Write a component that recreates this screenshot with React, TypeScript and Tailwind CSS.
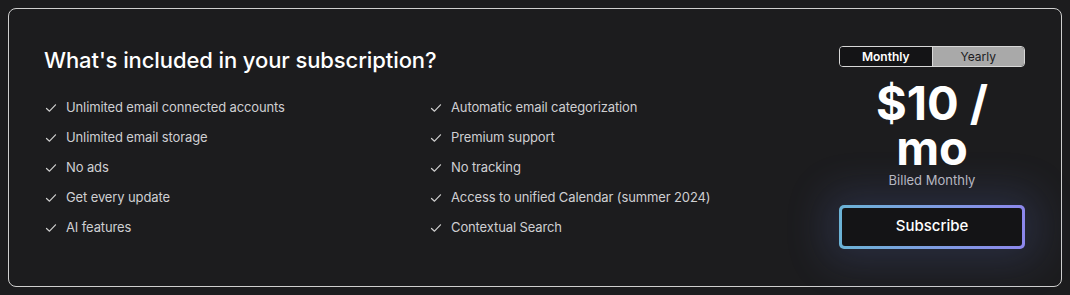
import React, { useState } from 'react';

const leftFeatures = [
  'Unlimited email connected accounts',
  'Unlimited email storage',
  'No ads',
  'Get every update',
  'AI features',
];

const rightFeatures = [
  'Automatic email categorization',
  'Premium support',
  'No tracking',
  'Access to unified Calendar (summer 2024)',
  'Contextual Search',
];

const Check: React.FC = () => (
  <svg width="12" height="12" viewBox="0 0 12 12" fill="none" className="shrink-0">
    <path d="M1.5 6.5 L4.5 9.2 L10.5 2.8" stroke="#cfcfcf" strokeWidth="1.2" strokeLinecap="round" strokeLinejoin="round" />
  </svg>
);

const FeatureList: React.FC<{ items: string[] }> = ({ items }) => (
  <ul className="flex flex-col gap-[12px]">
    {items.map((item) => (
      <li key={item} className="flex items-center gap-[9px] h-[18px] text-[13px] tracking-[-0.12px] text-[#cfcfd2]">
        <Check />
        {item}
      </li>
    ))}
  </ul>
);

const App: React.FC = () => {
  const [period, setPeriod] = useState<'monthly' | 'yearly'>('monthly');

  return (
    <div
      className="w-[1070px] h-[295px] bg-[#1c1c1e] p-[8px]"
      style={{ fontFamily: 'Inter, "Liberation Sans", sans-serif' }}
    >
      <div className="h-[279px] rounded-[8px] border-[1.5px] border-[#cfcfcf] bg-[#1c1c1e] flex pl-[35px] pr-[36px] pt-[37px]">
        {/* Features */}
        <div className="flex-1">
          <h2 className="text-[22px] leading-[28px] font-medium text-white tracking-[-0.1px]">
            What's included in your subscription?
          </h2>
          <div className="grid grid-cols-[385px_1fr] mt-[25px] pl-[1px]">
            <FeatureList items={leftFeatures} />
            <FeatureList items={rightFeatures} />
          </div>
        </div>

        {/* Pricing */}
        <div className="w-[186px] flex flex-col items-center">
          <div className="w-full h-[21px] flex rounded-[4px] border border-[#d8d8d8] overflow-hidden text-[12px]">
            <button
              onClick={() => setPeriod('monthly')}
              className={`flex-1 ${period === 'monthly' ? 'bg-[#141416] text-white font-semibold' : 'bg-[#a9a9a9] text-[#1c1c1e]'}`}
            >
              Monthly
            </button>
            <button
              onClick={() => setPeriod('yearly')}
              className={`flex-1 border-l border-[#d8d8d8] ${period === 'yearly' ? 'bg-[#141416] text-white font-semibold' : 'bg-[#a9a9a9] text-[#1c1c1e]'}`}
            >
              Yearly
            </button>
          </div>
          <div className="mt-[13px] text-center text-[47px] font-bold text-white">
            <div className="leading-[45px]">$10 /</div>
            <div className="leading-[45px]">mo</div>
          </div>
          <div className="mt-[1px] text-[13px] text-[#bdbdc2]">Billed Monthly</div>
          <div className="mt-[14px] w-full rounded-[5px] p-[3px] bg-gradient-to-r from-[#6bb3d6] to-[#8c87ec] shadow-[0_0_40px_14px_rgba(90,110,190,0.2)]">
            <button className="w-full h-[38px] rounded-[3px] bg-[#141416] text-white text-[15px] font-medium">
              Subscribe
            </button>
          </div>
        </div>
      </div>
    </div>
  );
};

export default App;
